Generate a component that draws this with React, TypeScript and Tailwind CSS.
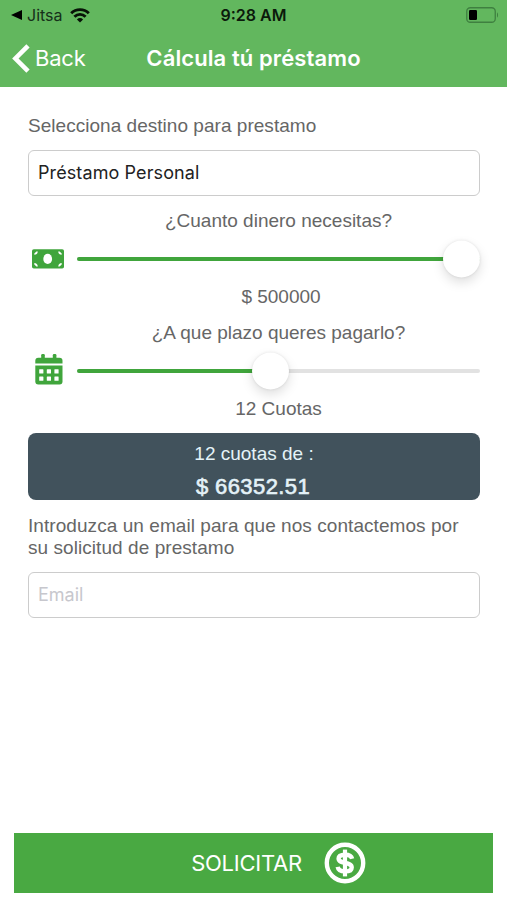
import { useState } from 'react';

function WifiIcon() {
  return (
    <svg width="20" height="15" viewBox="0 0 20 15" fill="none" stroke="#071207" strokeWidth="2.9">
      <path d="M1.2 5.2C6 0.4 14 0.4 18.8 5.2" />
      <path d="M4.4 8.8C7.6 5.6 12.4 5.6 15.6 8.8" />
      <path d="M6.9 11.4C8.7 9.6 11.3 9.6 13.1 11.4L10 14.6Z" fill="#071207" stroke="none" />
    </svg>
  );
}

function BatteryIcon() {
  return (
    <svg width="33" height="16" viewBox="0 0 33 16" fill="none">
      <rect x="0.75" y="0.75" width="28.5" height="14.5" rx="3.6" stroke="#3f8040" strokeWidth="1.3" />
      <rect x="3" y="3" width="8" height="10" rx="1.2" fill="#000" />
      <path d="M31 5.5C32.4 6 32.4 10 31 10.5Z" fill="#3f8040" />
    </svg>
  );
}

function CashIcon() {
  return (
    <svg width="32" height="20" viewBox="0 0 32 20">
      <rect x="0" y="0.3" width="32" height="19.2" rx="1.8" fill="#40a53c" />
      <ellipse cx="15.7" cy="9.9" rx="4.4" ry="5.1" fill="#fff" />
      <g fill="#fff">
        <path d="M2.3 5.8V4.4L4.4 2.4H5.8C5.6 4.5 4.4 5.6 2.3 5.8Z" />
        <path d="M29.7 5.8V4.4L27.6 2.4H26.2C26.4 4.5 27.6 5.6 29.7 5.8Z" />
        <path d="M2.3 14V15.4L4.4 17.4H5.8C5.6 15.3 4.4 14.2 2.3 14Z" />
        <path d="M29.7 14V15.4L27.6 17.4H26.2C26.4 15.3 27.6 14.2 29.7 14Z" />
      </g>
    </svg>
  );
}

function CalendarIcon() {
  return (
    <svg width="28" height="31" viewBox="0 0 28 31">
      <g fill="#40a53c">
        <rect x="6.2" y="0" width="3.6" height="7" rx="1.2" />
        <rect x="17.8" y="0" width="3.6" height="7" rx="1.2" />
        <path d="M0.3 9.6V6.8A3 3 0 0 1 3.3 3.8H24.5A3 3 0 0 1 27.5 6.8V9.6Z" />
        <path d="M0.3 11.6H27.5V27.5A3 3 0 0 1 24.5 30.5H3.3A3 3 0 0 1 0.3 27.5Z" />
      </g>
      <g fill="#fff">
        <rect x="4.2" y="15.2" width="4.2" height="4.2" rx="0.5" />
        <rect x="11.8" y="15.2" width="4.2" height="4.2" rx="0.5" />
        <rect x="19.4" y="15.2" width="4.2" height="4.2" rx="0.5" />
        <rect x="4.2" y="22.6" width="4.2" height="4.2" rx="0.5" />
        <rect x="11.8" y="22.6" width="4.2" height="4.2" rx="0.5" />
        <rect x="19.4" y="22.6" width="4.2" height="4.2" rx="0.5" />
      </g>
    </svg>
  );
}

function DollarIcon() {
  return (
    <svg width="42" height="42" viewBox="0 0 42 42" fill="none" stroke="#fff">
      <circle cx="21" cy="21" r="18.2" strokeWidth="4.4" />
      <path d="M21 7.6V34.4" strokeWidth="4.2" />
      <path
        d="M28.1 16.8C27.4 13.8 24.9 12.7 21.2 12.7C17.2 12.7 14.6 14 14.6 16.6C14.6 19.4 17.3 20 21 20.8C25.1 21.7 27.7 22.4 27.7 25.4C27.7 28.2 24.9 29.4 21.1 29.4C16.9 29.4 14.2 28 13.7 24.9"
        strokeWidth="4.4"
      />
    </svg>
  );
}

type SliderProps = {
  percent: number;
};

function Slider({ percent }: SliderProps) {
  return (
    <div className="relative h-1 flex-1 rounded-full bg-[#e2e2e2]">
      <div className="h-1 rounded-full bg-[#40a53c]" style={{ width: `${percent}%` }} />
      {/* Thumb stays inside the track at both ends */}
      <div
        className="absolute top-1/2 size-[37px] -translate-y-1/2 rounded-full bg-white shadow-[0_5px_12px_rgba(0,0,0,0.13),0_0_3px_rgba(0,0,0,0.1)]"
        style={{ left: `calc((100% - 37px) * ${percent / 100})` }}
      />
    </div>
  );
}

export default function App() {
  const [email, setEmail] = useState('');

  return (
    <div className="flex h-[900px] w-[507px] flex-col overflow-hidden bg-white font-['Liberation_Sans',Arial,sans-serif] text-[19px] text-[#666]">
      {/* Header */}
      <header className="h-[87px] bg-[#62b75e] font-[Inter,sans-serif]">
        <div className="grid h-[30px] grid-cols-3 items-center pr-2 pl-[11px] text-[16px] text-[#16301a]">
          <div className="flex items-center">
            <svg width="11" height="10" viewBox="0 0 11 10">
              <path d="M0 5L11 0V10Z" fill="#000" />
            </svg>
            <span className="mr-[7px] ml-[5px]">Jitsa</span>
            <WifiIcon />
          </div>
          <span className="pr-[3px] text-center text-[16px] font-semibold text-[#0b1a0b]">9:28 AM</span>
          <div className="flex justify-end pb-px">
            <BatteryIcon />
          </div>
        </div>
        <div className="grid h-[56px] grid-cols-[134px_1fr_134px] items-center text-white">
          <button className="flex items-center pl-3 text-[22px]">
            <svg width="18" height="29" viewBox="0 0 18 29" fill="none" stroke="#fff" strokeWidth="4.6">
              <path d="M16 1.8L3.4 14.5L16 27.2" />
            </svg>
            <span className="ml-[5px] tracking-[-0.2px]">Back</span>
          </button>
          <h1 className="text-center text-[22px] font-semibold tracking-[0.1px] whitespace-nowrap">Cálcula tú préstamo</h1>
        </div>
      </header>

      {/* Loan form */}
      <main className="flex flex-1 flex-col pr-[27px] pl-7">
        <label className="mt-7 leading-[22px] tracking-[0.03px]">Selecciona destino para prestamo</label>
        <div className="mt-[13px] flex h-[46px] items-center rounded-md border border-[#ccc] px-[9px] pb-0.5 font-[Inter,sans-serif] text-[18px] tracking-[0.1px] text-[#222]">
          Préstamo Personal
        </div>

        <p className="mt-[14px] pl-[49px] text-center leading-[22px]">¿Cuanto dinero necesitas?</p>
        <div className="mt-[7px] flex h-[40px] items-center">
          <div className="w-[49px] pl-1">
            <CashIcon />
          </div>
          <Slider percent={100} />
        </div>
        <p className="mt-[7px] pl-[54px] text-center leading-[22px]">$ 500000</p>

        <p className="mt-[14px] pl-[49px] text-center leading-[22px]">¿A que plazo queres pagarlo?</p>
        <div className="mt-[7px] flex h-[40px] items-center">
          <div className="w-[49px] pb-[3px] pl-[7px]">
            <CalendarIcon />
          </div>
          <Slider percent={47.7} />
        </div>
        <p className="mt-[7px] pl-[49px] text-center leading-[22px]">12 Cuotas</p>

        <div className="mt-[13px] h-[67px] rounded-lg bg-[#41525c] pt-[10px] text-center text-[#e4f2f8]">
          <p className="leading-[22px]">12 cuotas de :</p>
          <p className="mt-[9px] pr-[2px] text-[22px] leading-[26px] tracking-[0.4px] [-webkit-text-stroke:0.6px_#e4f2f8]">
            $ 66352.51
          </p>
        </div>

        <p className="mt-[15px] leading-[22px] tracking-[0.06px]">
          Introduzca un email para que nos contactemos por su solicitud de prestamo
        </p>
        <input
          type="email"
          placeholder="Email"
          value={email}
          onChange={(e) => setEmail(e.target.value)}
          className="mt-[13px] h-[46px] w-full rounded-md border border-[#ccc] px-[9px] pb-0.5 font-[Inter,sans-serif] text-[18px] text-[#222] placeholder:text-[#c7c7cd]"
        />
      </main>

      {/* Submit */}
      <button className="mx-[14px] mb-[7px] flex h-[60px] items-center justify-center bg-[#49a942] pl-[50px] font-[Inter,sans-serif] text-[22px] text-white">
        <span className="mr-[22px] tracking-[-0.25px]">SOLICITAR</span>
        <DollarIcon />
      </button>
    </div>
  );
}
